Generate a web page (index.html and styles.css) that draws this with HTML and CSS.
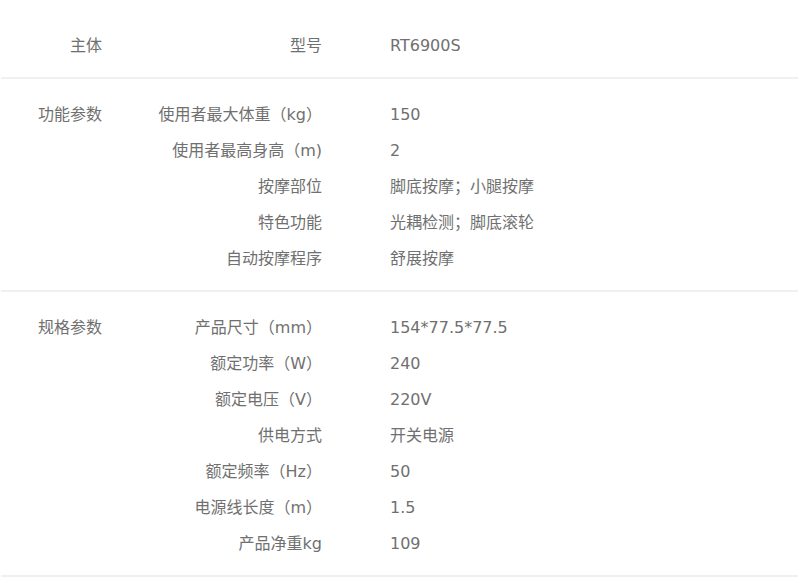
FILE: index.html
```html
<!DOCTYPE html>
<html lang="zh-CN">
<head>
<meta charset="utf-8">
<title>规格参数</title>
<link rel="stylesheet" href="styles.css">
</head>
<body>
<div class="specs">
  <section class="group">
    <div class="group-name">主体</div>
    <div class="rows">
      <div class="row"><span class="key">型号</span><span class="val">RT6900S</span></div>
    </div>
  </section>
  <section class="group">
    <div class="group-name">功能参数</div>
    <div class="rows">
      <div class="row"><span class="key">使用者最大体重（kg）</span><span class="val">150</span></div>
      <div class="row"><span class="key">使用者最高身高（m)</span><span class="val">2</span></div>
      <div class="row"><span class="key">按摩部位</span><span class="val">脚底按摩；小腿按摩</span></div>
      <div class="row"><span class="key">特色功能</span><span class="val">光耦检测；脚底滚轮</span></div>
      <div class="row"><span class="key">自动按摩程序</span><span class="val">舒展按摩</span></div>
    </div>
  </section>
  <section class="group">
    <div class="group-name">规格参数</div>
    <div class="rows">
      <div class="row"><span class="key">产品尺寸（mm）</span><span class="val">154*77.5*77.5</span></div>
      <div class="row"><span class="key">额定功率（W）</span><span class="val">240</span></div>
      <div class="row"><span class="key">额定电压（V）</span><span class="val">220V</span></div>
      <div class="row"><span class="key">供电方式</span><span class="val">开关电源</span></div>
      <div class="row"><span class="key">额定频率（Hz）</span><span class="val">50</span></div>
      <div class="row"><span class="key">电源线长度（m）</span><span class="val">1.5</span></div>
      <div class="row"><span class="key">产品净重kg</span><span class="val">109</span></div>
    </div>
  </section>
</div>
</body>
</html>
```

FILE: styles.css
```css
html, body {
  background: #ffffff;
}
body {
  margin: 10px 0 0 0;
  font-family: "DejaVu Sans", "Noto Sans CJK SC", sans-serif;
  font-size: 16px;
  color: #707070;
}
.specs {
  margin: 0 2px 0 1px;
}
.group {
  display: flex;
  padding: 18px 0 13px 0;
  border-bottom: 2px solid #f0f0f0;
}
.group-name {
  width: 101px;
  flex: none;
  text-align: right;
  height: 36px;
  line-height: 36px;
  white-space: nowrap;
}
.rows {
  display: flex;
  flex-direction: column;
}
.row {
  display: flex;
  height: 36px;
  line-height: 36px;
  white-space: nowrap;
}
.key {
  width: 220px;
  text-align: right;
  flex: none;
}
.val {
  padding-left: 68px;
}
```
